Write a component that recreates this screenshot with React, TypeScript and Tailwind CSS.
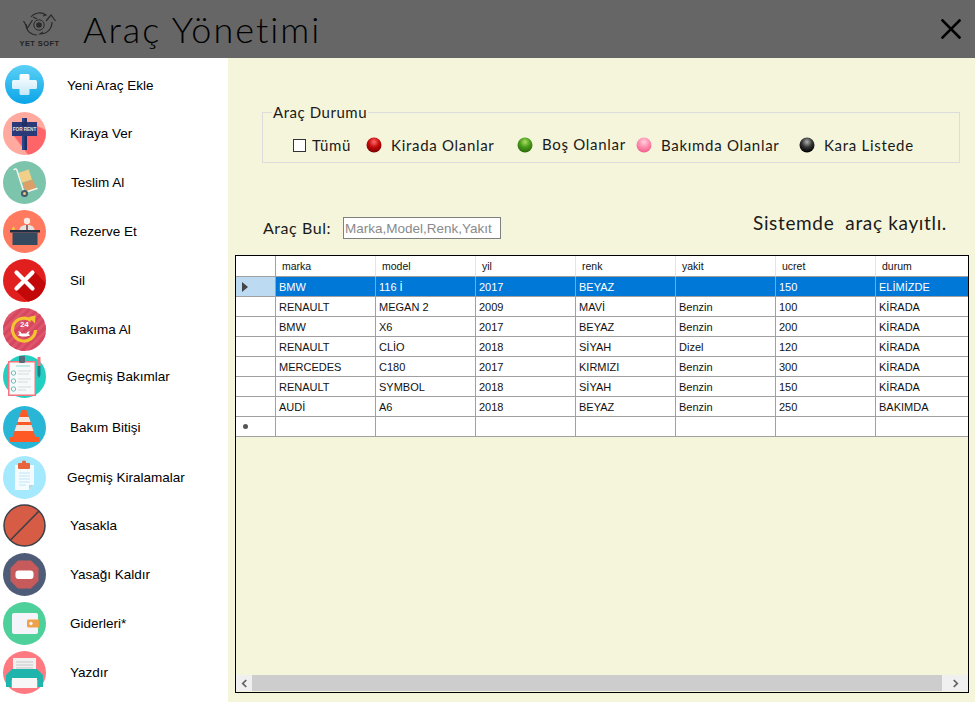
import React from 'react';

const PlusIcon = () => (
  <svg viewBox="0 0 43 43" className="w-[43px] h-[43px]">
    <defs>
      <linearGradient id="plusBg" x1="0" y1="0" x2="0" y2="1">
        <stop offset="0" stopColor="#5cd0f5" />
        <stop offset="1" stopColor="#0aa5e8" />
      </linearGradient>
      <linearGradient id="plusFg" x1="0" y1="0" x2="0" y2="1">
        <stop offset="0" stopColor="#ffffff" />
        <stop offset="1" stopColor="#c4e8f8" />
      </linearGradient>
    </defs>
    <circle cx="21.5" cy="21.5" r="19.5" fill="url(#plusBg)" />
    <path d="M16.5 12.5a1.500 1.500 0 0 1 1.500-1.500h7a1.500 1.500 0 0 1 1.500 1.500V17h6a1.500 1.500 0 0 1 1.500 1.500v6a1.500 1.500 0 0 1-1.500 1.500h-6v4.500a1.500 1.500 0 0 1-1.500 1.500h-7a1.500 1.500 0 0 1-1.500-1.500V26h-6A1.500 1.500 0 0 1 9 24.500v-6A1.500 1.500 0 0 1 10.500 17h6z" fill="url(#plusFg)" />
  </svg>
);

const RentIcon = () => (
  <svg viewBox="0 0 43 43" className="w-[43px] h-[43px]">
    <circle cx="21.5" cy="21.5" r="21.500" fill="#ffa99f" />
    <path d="M34 14L42.500 18A21.500 21.500 0 0 1 25 42.700L11 24z" fill="#ff6468" />
    <rect x="19" y="6" width="5" height="32" fill="#2a4488" />
    <rect x="21.500" y="6" width="2.500" height="32" fill="#1f2f66" />
    <rect x="9" y="10" width="25" height="14" fill="#2a3a78" />
    <rect x="19" y="10" width="5" height="4" fill="#1f2f66" />
    <text x="21.500" y="18.500" textAnchor="middle" fontSize="4.600" fontWeight="700" fill="#e8e4d8" fontFamily="Liberation Sans, sans-serif">FOR RENT</text>
  </svg>
);

const TruckIcon = () => (
  <svg viewBox="0 0 43 43" className="w-[43px] h-[43px]">
    <circle cx="21.5" cy="21.5" r="21.500" fill="#7cc4ab" />
    <rect x="17" y="10" width="10.500" height="10.500" transform="rotate(-18 22 15)" fill="#f2cf86" />
    <rect x="21" y="20" width="11" height="10" transform="rotate(-18 26 25)" fill="#dd9f68" />
    <path d="M11 8.500c1.500-1 2.500-.5 3 1l7 22" fill="none" stroke="#f5f5f0" strokeWidth="1.500" strokeLinecap="round" />
    <path d="M20 32l14-4.500" stroke="#f5f5f0" strokeWidth="1.500" strokeLinecap="round" />
    <circle cx="21.500" cy="32.500" r="3.500" fill="#45596b" />
    <circle cx="21.500" cy="32.500" r="1.500" fill="#e8c87c" />
  </svg>
);

const DeskIcon = () => (
  <svg viewBox="0 0 43 43" className="w-[43px] h-[43px]">
    <circle cx="21.5" cy="21.5" r="21.500" fill="#ff7a5e" />
    <circle cx="24" cy="11" r="3.200" fill="#f8ece4" />
    <path d="M16.500 20.500c0-4 3-5.500 7.500-5.500s7.500 1.500 7.500 5.500z" fill="#e6e2e2" />
    <rect x="23" y="15" width="2" height="5" fill="#8b6a6a" />
    <rect x="7" y="20" width="30" height="2.500" fill="#1f2e40" />
    <rect x="9.500" y="22.500" width="25" height="12.500" fill="#34495e" />
    <circle cx="10.500" cy="18.500" r="1.500" fill="#f1c84b" />
  </svg>
);

const DeleteIcon = () => (
  <svg viewBox="0 0 43 43" className="w-[43px] h-[43px]">
    <circle cx="21.5" cy="21.5" r="21.500" fill="#e11f1f" />
    <path d="M31 12L42.500 24A21.500 21.500 0 0 1 25 42.700L12 31z" fill="#c20808" />
    <path d="M13.500 13.500l16 16M29.500 13.500l-16 16" stroke="#ffffff" strokeWidth="4.200" strokeLinecap="round" />
  </svg>
);

const ServiceIcon = () => (
  <svg viewBox="0 0 43 43" className="w-[43px] h-[43px]">
    <defs>
      <pattern id="serviceStripes" width="6" height="6" patternUnits="userSpaceOnUse" patternTransform="rotate(45)">
        <rect width="3" height="6" fill="#d5475f" />
      </pattern>
    </defs>
    <circle cx="21.5" cy="21.5" r="21.500" fill="#df556c" />
    <circle cx="21.5" cy="21.5" r="21.500" fill="url(#serviceStripes)" />
    <path d="M32.500 22a11.500 11.500 0 1 1-4.500-9.500" fill="none" stroke="#f2c430" strokeWidth="3.200" />
    <path d="M25.500 9l7-1.500-.5 8z" fill="#f2c430" />
    <text x="21.500" y="19" textAnchor="middle" fontSize="7.500" fontWeight="700" fill="#ffffff" fontFamily="Liberation Sans, sans-serif">24</text>
    <path d="M15 23.500c2 0 3 .5 3.500 2h5c.5-1.500 1.500-2 3.500-2l-1.500 2 1.500 2c-2 .8-3 .5-3.500 1h-5c-.5-.5-1.500-.2-3.500-1l1.500-2z" fill="#ffffff" />
  </svg>
);

const ChecklistIcon = () => (
  <svg viewBox="0 0 43 43" className="w-[43px] h-[43px]">
    <circle cx="21.5" cy="21.5" r="21.500" fill="#22cfc0" />
    <rect x="5" y="6" width="28" height="35" fill="#f4737f" />
    <rect x="6.500" y="7.500" width="25" height="32" fill="#f7fafa" />
    <rect x="16" y="1" width="6" height="7" rx="1" fill="#5a6a78" />
    <rect x="34.500" y="2" width="3" height="9" fill="#f4737f" />
    <path d="M34.500 11h3v9l-1.500 3-1.500-3z" fill="#1f7f86" />
    <path d="M13 11h14" stroke="#8fd8d2" strokeWidth="1" />
    <circle cx="10.500" cy="18" r="2.200" fill="none" stroke="#6fbcb8" strokeWidth="1" />
    <circle cx="10.500" cy="26" r="2.200" fill="none" stroke="#6fbcb8" strokeWidth="1" />
    <circle cx="10.500" cy="34" r="2.200" fill="none" stroke="#6fbcb8" strokeWidth="1" />
    <path d="M15 16h13M15 19h11M15 24h13M15 27h10M15 32h13M15 35h8" stroke="#d4dcdc" strokeWidth="1.200" />
  </svg>
);

const ConeIcon = () => (
  <svg viewBox="0 0 43 43" className="w-[43px] h-[43px]">
    <circle cx="21.5" cy="21.5" r="21.500" fill="#29b6d6" />
    <path d="M18.500 4h5L33 33H9z" fill="#ff5a26" />
    <path d="M16.100 11h9.800l1.700 5H14.500z" fill="#f7e6dc" />
    <path d="M13.500 19h15l2 6H11.500z" fill="#f7e6dc" />
    <rect x="6.500" y="31" width="30" height="5" rx="1" fill="#ff5a26" />
  </svg>
);

const ReportIcon = () => (
  <svg viewBox="0 0 43 43" className="w-[43px] h-[43px]">
    <circle cx="21.5" cy="21.5" r="21.500" fill="#a5e9ff" />
    <path d="M12 9h19v20l-5 5H12z" fill="#f4fbff" />
    <path d="M26 34v-5h5z" fill="#b8d8e4" />
    <rect x="15" y="7" width="12" height="6" rx="1" fill="#e8643c" />
    <rect x="19" y="4.500" width="4" height="4" rx="1.500" fill="#e8643c" />
    <path d="M16 17h11M16 20h11M16 23h11M16 26h11M16 29h7" stroke="#bfe6f5" strokeWidth="1.200" />
  </svg>
);

const BanIcon = () => (
  <svg viewBox="0 0 43 43" className="w-[43px] h-[43px]">
    <circle cx="21.5" cy="21.5" r="20.500" fill="#d65c46" stroke="#3c4048" strokeWidth="1.500" />
    <path d="M7 36.500L36 7" stroke="#3c4048" strokeWidth="1.600" />
  </svg>
);

const UnbanIcon = () => (
  <svg viewBox="0 0 43 43" className="w-[43px] h-[43px]">
    <circle cx="21.5" cy="21.5" r="21.500" fill="#4e5c78" />
    <path d="M15 7.500h13l7.500 7.500v13L28 35.500H15L7.500 28V15z" fill="#c75a5a" />
    <rect x="12.500" y="17.500" width="18" height="8.500" rx="3" fill="#ffffff" />
  </svg>
);

const WalletIcon = () => (
  <svg viewBox="0 0 43 43" className="w-[43px] h-[43px]">
    <circle cx="21.5" cy="21.500" r="21.500" fill="#4ed09b" />
    <rect x="9" y="11" width="26" height="21" rx="2" fill="#f5f4fb" />
    <path d="M25.500 17.500H36v8H25.500a1.500 1.500 0 0 1-1.500-1.500v-5a1.500 1.500 0 0 1 1.500-1.500z" fill="#f0a24a" />
    <circle cx="28" cy="21.500" r="1.700" fill="#f5f4fb" />
  </svg>
);

const PrinterIcon = () => (
  <svg viewBox="0 0 43 43" className="w-[43px] h-[43px]">
    <circle cx="21.5" cy="21.5" r="21.500" fill="#ff7a80" />
    <rect x="10" y="7" width="23" height="15" fill="#f0f0f0" />
    <path d="M13 11h17M13 14h17M13 17h17" stroke="#c8c8c8" strokeWidth="1.200" />
    <path d="M9 18h25l6 6v12h-5v-7H8v7H3V24z" fill="#1fb5ad" />
    <rect x="9" y="27" width="25" height="10" fill="#f7f7f7" />
  </svg>
);

const sideItems = [
  { label: 'Yeni Araç Ekle', icon: <PlusIcon />, text: 'ml-[21px] translate-y-[2px]', row: '' },
  { label: 'Kiraya Ver', icon: <RentIcon />, text: 'ml-[24px] translate-y-[1px]', row: '' },
  { label: 'Teslim Al', icon: <TruckIcon />, text: 'ml-[25px] translate-y-[1px]', row: '' },
  { label: 'Rezerve Et', icon: <DeskIcon />, text: 'ml-[24px] translate-y-[1px]', row: '' },
  { label: 'Sil', icon: <DeleteIcon />, text: 'ml-[24px] translate-y-[1px]', row: '' },
  { label: 'Bakıma Al', icon: <ServiceIcon />, text: 'ml-[24px] translate-y-[1px]', row: '' },
  { label: 'Geçmiş Bakımlar', icon: <ChecklistIcon />, text: 'ml-[21px] -translate-y-[1px]', row: '-translate-y-[2px]' },
  { label: 'Bakım Bitişi', icon: <ConeIcon />, text: 'ml-[24px] translate-y-[1px]', row: '' },
  { label: 'Geçmiş Kiralamalar', icon: <ReportIcon />, text: 'ml-[21px] translate-y-[2px]', row: 'translate-y-[1px]' },
  { label: 'Yasakla', icon: <BanIcon />, text: 'ml-[24px] translate-y-[1px]', row: '' },
  { label: 'Yasağı Kaldır', icon: <UnbanIcon />, text: 'ml-[24px] translate-y-[1px]', row: '' },
  { label: 'Giderleri*', icon: <WalletIcon />, text: 'ml-[24px] translate-y-[1px]', row: '' },
  { label: 'Yazdır', icon: <PrinterIcon />, text: 'ml-[24px] translate-y-[1px]', row: '' },
];

const columns = ['marka', 'model', 'yil', 'renk', 'yakit', 'ucret', 'durum'];

const cars = [
  ['BMW', '116 İ', '2017', 'BEYAZ', '', '150', 'ELİMİZDE'],
  ['RENAULT', 'MEGAN 2', '2009', 'MAVİ', 'Benzin', '100', 'KİRADA'],
  ['BMW', 'X6', '2017', 'BEYAZ', 'Benzin', '200', 'KİRADA'],
  ['RENAULT', 'CLİO', '2018', 'SİYAH', 'Dizel', '120', 'KİRADA'],
  ['MERCEDES', 'C180', '2017', 'KIRMIZI', 'Benzin', '300', 'KİRADA'],
  ['RENAULT', 'SYMBOL', '2018', 'SİYAH', 'Benzin', '150', 'KİRADA'],
  ['AUDİ', 'A6', '2018', 'BEYAZ', 'Benzin', '250', 'BAKIMDA'],
];

const Ball = ({ id, light, mid, dark }: { id: string; light: string; mid: string; dark: string }) => (
  <svg viewBox="0 0 16 16" className="w-4 h-4 shrink-0">
    <defs>
      <radialGradient id={id} cx="0.5" cy="0.3" r="0.7">
        <stop offset="0" stopColor={light} />
        <stop offset="0.5" stopColor={mid} />
        <stop offset="1" stopColor={dark} />
      </radialGradient>
    </defs>
    <circle cx="8" cy="8" r="7.500" fill={`url(#${id})`} />
  </svg>
);

export default function App() {
  return (
    <div className="w-[975px] h-[702px] overflow-hidden flex flex-col bg-white font-['Liberation_Sans',sans-serif]">
      <header className="h-[58px] shrink-0 bg-[#666666] flex items-center pl-[23px] pr-[14px]">
        <div className="w-[33px] flex flex-col items-center pt-[1px]">
          <svg viewBox="0 0 33 24" className="w-[33px] h-[24px]" fill="none" stroke="#2a2a2a">
            <circle cx="16" cy="13" r="2.800" fill="#2a2a2a" stroke="none" />
            <circle cx="16" cy="13" r="5.200" strokeWidth="1" />
            <path d="M8 5c4-5 11-5 15-2l-3 1M3 12c0 7 5 11 11 11" strokeWidth="1.200" />
            <path d="M29 10c0 7-5 12-12 12l3-2M10 5l4 2" strokeWidth="1.200" />
            <path d="M0.500 9l4 7 5-8M23 9l5-6 4.500 6" strokeWidth="1.200" />
          </svg>
          <span className="mt-[4px] text-[7.500px] leading-[7px] tracking-[0.4px] text-[#222222] font-bold whitespace-nowrap">YET SOFT</span>
        </div>
        <h1 className="ml-[27px] text-[36px] leading-none font-light tracking-[2px] text-black font-['Lato',sans-serif]">Araç Yönetimi</h1>
        <svg viewBox="0 0 20 20" className="ml-auto w-[20px] h-[20px]" stroke="#000000" strokeWidth="2.600" strokeLinecap="square">
          <path d="M1.500 1.500l17 17M18.500 1.500l-17 17" />
        </svg>
      </header>

      <div className="flex-1 flex min-h-0">
        <aside className="w-[228px] shrink-0 bg-white pt-[2px] pl-[3px] flex flex-col text-[13.500px] text-black">
          {sideItems.map((item) => (
            <div key={item.label} className="h-[49px] shrink-0 flex items-center">
              <span className={`w-[43px] h-[43px] shrink-0 ${item.row}`}>{item.icon}</span>
              <span className={`${item.text} whitespace-nowrap`}>{item.label}</span>
            </div>
          ))}
        </aside>

        <main className="flex-1 bg-[#f5f5dc] pt-[45px] font-['Lato',sans-serif] text-[#1a1a1a]">
          <fieldset className="ml-[34px] mr-[15px] h-[60px] border border-[#dcdcdc] pl-[9px]">
            <legend className="px-[1px] text-[15px] leading-[18px] tracking-[0.55px]">Araç Durumu</legend>
            <div className="flex items-center text-[15px] tracking-[0.7px] pl-[21px] pt-[13px]">
              <span className="w-[13px] h-[13px] border border-[#333333] bg-white shrink-0" />
              <span className="ml-[6px] w-[54px]">Tümü</span>
              <Ball id="ballRed" light="#ff6a6a" mid="#c40a0a" dark="#7a0000" />
              <span className="ml-[9px] w-[126px] whitespace-nowrap">Kirada Olanlar</span>
              <Ball id="ballGreen" light="#a8e060" mid="#4a9a1a" dark="#2a6a0a" />
              <span className="ml-[9px] w-[94px] whitespace-nowrap -translate-y-[1px]">Boş Olanlar</span>
              <Ball id="ballPink" light="#ffd0dc" mid="#ff8fb0" dark="#f0608c" />
              <span className="ml-[9px] w-[138px] whitespace-nowrap">Bakımda Olanlar</span>
              <Ball id="ballBlack" light="#b0b0b0" mid="#333333" dark="#000000" />
              <span className="ml-[9px] whitespace-nowrap">Kara Listede</span>
            </div>
          </fieldset>

          <div className="ml-[35px] mr-[28px] mt-[54px] h-[22px] flex items-center">
            <span className="text-[16px] tracking-[0.55px] w-[80px]">Araç Bul:</span>
            <input
              readOnly
              placeholder="Marka,Model,Renk,Yakıt"
              className="w-[158px] h-[22px] bg-white border border-[#808080] px-[1px] text-[13.500px] font-['Liberation_Sans',sans-serif] placeholder:text-[#8a8a8a] outline-none"
            />
            <span className="ml-auto text-[19px] tracking-[0.65px] whitespace-pre -translate-y-[5px]">Sistemde  araç kayıtlı.</span>
          </div>

          <section className="ml-[7px] mt-[16px] w-[734px] h-[438px] border border-black flex flex-col overflow-hidden font-['Liberation_Sans',sans-serif] text-[11px] text-[#111111]">
            <div className="flex-1 min-h-0 overflow-hidden">
              <div className="grid grid-cols-[40px_repeat(7,100px)] w-[740px] h-[21px] bg-white">
                <div className="border-r border-b border-[#a0a0a0]" />
                {columns.map((c) => (
                  <div key={c} className="border-r border-b border-r-[#e4e4e4] border-b-[#a0a0a0] pl-[6px] pt-[1px] leading-[19px] text-[10.500px]">{c}</div>
                ))}
              </div>
              {cars.map((car, i) => (
                <div key={i} className="grid grid-cols-[40px_repeat(7,100px)] w-[740px] h-[20px]">
                  <div className={`border-r border-b border-[#a0a0a0] flex items-center pl-[6px] ${i === 0 ? 'bg-[#bcdaf2]' : 'bg-white'}`}>
                    {i === 0 && (
                      <svg viewBox="0 0 7 10" className="w-[7px] h-[10px]"><path d="M0 0l6 5-6 5z" fill="#444444" /></svg>
                    )}
                  </div>
                  {car.map((v, j) => (
                    <div key={j} className={`border-r border-b border-[#a0a0a0] pl-[3px] pt-[1px] leading-[18px] whitespace-nowrap ${i === 0 ? 'bg-[#0078d7] text-white' : 'bg-white'}`}>{v}</div>
                  ))}
                </div>
              ))}
              <div className="grid grid-cols-[40px_repeat(7,100px)] w-[740px] h-[20px] bg-white">
                <div className="border-r border-b border-[#a0a0a0] flex items-center pl-[7px]">
                  <span className="w-[5px] h-[5px] rounded-full bg-[#555555]" />
                </div>
                {columns.map((c) => (
                  <div key={c} className="border-r border-b border-[#a0a0a0]" />
                ))}
              </div>
            </div>

            <div className="h-[16px] shrink-0 bg-[#f0f0f0] flex items-center mb-[1px]">
              <div className="w-[16px] flex justify-center">
                <svg viewBox="0 0 8 10" className="w-[7px] h-[9px]" fill="none" stroke="#606060" strokeWidth="2"><path d="M6 1L2 5l4 4" /></svg>
              </div>
              <div className="flex-1 h-full bg-[#cdcdcd]" />
              <div className="w-[26px] flex justify-center">
                <svg viewBox="0 0 8 10" className="w-[7px] h-[9px]" fill="none" stroke="#606060" strokeWidth="2"><path d="M2 1l4 4-4 4" /></svg>
              </div>
            </div>
          </section>
        </main>
      </div>
    </div>
  );
}
